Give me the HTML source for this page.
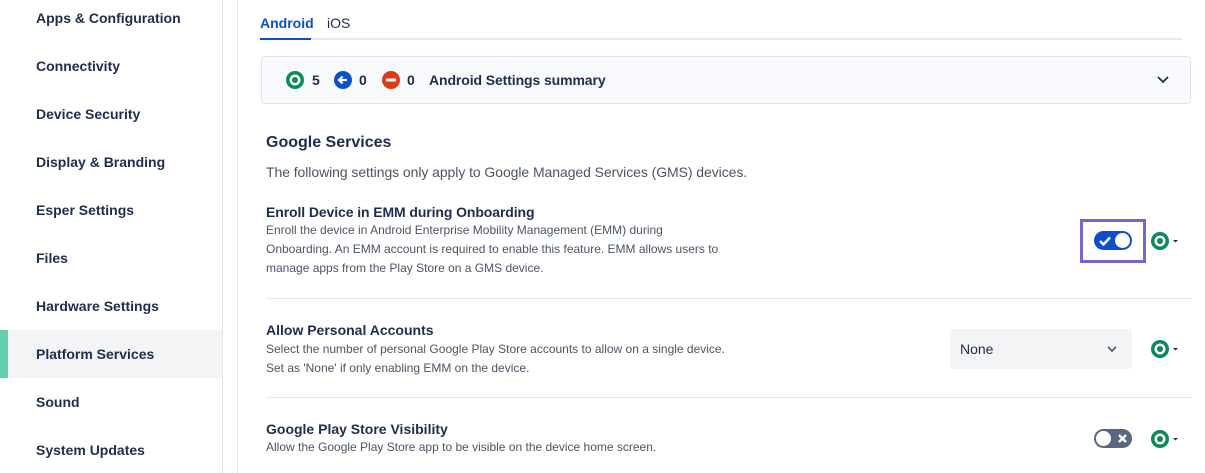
<!DOCTYPE html><html><head><style>
body{margin:0;width:1205px;height:473px;overflow:hidden;font-family:"Liberation Sans",sans-serif;background:#fff;color:#1f2d4d;position:relative}
.sb{position:absolute;left:0;top:0;width:222px;height:473px;border-right:1px solid #e5e7eb}
.sb div{position:absolute;left:36px;font-size:14px;font-weight:bold;color:#1f2d4d}
.act{position:absolute;left:0;top:330px;width:222px;height:48px;background:#f3f4f6}
.act:before{content:"";position:absolute;left:0;top:0;width:8px;height:48px;background:#62d0b0}
.vl{position:absolute;left:237px;top:0;width:1px;height:473px;background:#e8e9ec}
.a{position:absolute}
.t{font-size:14px;font-weight:bold}
.d{font-size:12px;color:#4b5563;line-height:19px}
</style></head><body>
<div class="sb">
<div style="top:10px">Apps &amp; Configuration</div>
<div style="top:58px">Connectivity</div>
<div style="top:106px">Device Security</div>
<div style="top:154px">Display &amp; Branding</div>
<div style="top:202px">Esper Settings</div>
<div style="top:250px">Files</div>
<div style="top:298px">Hardware Settings</div>
</div>
<div class="act"></div>
<div class="sb" style="background:none;border:none">
<div style="top:346px">Platform Services</div>
<div style="top:394px">Sound</div>
<div style="top:442px">System Updates</div>
</div>
<div class="vl"></div>
<div class="a" style="left:260px;top:15px;font-size:14px;color:#0b50c9;font-weight:bold">Android</div>
<div class="a" style="left:327px;top:15px;font-size:14px;color:#1f2d4d">iOS</div>
<div class="a" style="left:260px;top:38px;width:922px;height:2px;background:#e5e7eb"></div>
<div class="a" style="left:260px;top:38px;width:51px;height:2px;background:#0b50c9"></div>
<div class="a" style="left:261px;top:56px;width:928px;height:46px;background:#f8fafd;border:1px solid #dfe3ea;border-radius:4px"></div>
<svg class="a" style="left:286px;top:71px" width="18" height="18"><circle cx="9" cy="9" r="9" fill="#0a8a5a"/><circle cx="9" cy="9" r="5.5" fill="#fff"/><circle cx="9" cy="9" r="3" fill="#0a8a5a"/></svg>
<div class="a t" style="left:312px;top:72px">5</div>
<svg class="a" style="left:334px;top:71px" width="18" height="18"><circle cx="9" cy="9" r="9" fill="#0b50c9"/><path d="M13 9H5M8.5 5.5L5 9l3.5 3.5" stroke="#fff" stroke-width="2.2" fill="none"/></svg>
<div class="a t" style="left:359px;top:72px">0</div>
<svg class="a" style="left:382px;top:71px" width="18" height="18"><circle cx="9" cy="9" r="9" fill="#dd3b14"/><rect x="4" y="7.5" width="10" height="3" fill="#fff"/></svg>
<div class="a t" style="left:407px;top:72px">0</div>
<div class="a t" style="left:429px;top:72px;letter-spacing:-0.1px">Android Settings summary</div>
<svg class="a" style="left:1157px;top:75px" width="12" height="10"><path d="M1 2l5 5 5-5" stroke="#1f2d4d" stroke-width="1.8" fill="none"/></svg>
<div class="a" style="left:266px;top:134px;font-size:16px;font-weight:bold">Google Services</div>
<div class="a" style="left:266px;top:164px;font-size:14px;color:#4b5563;letter-spacing:-0.07px">The following settings only apply to Google Managed Services (GMS) devices.</div>
<div class="a t" style="left:266px;top:204px;letter-spacing:-0.1px">Enroll Device in EMM during Onboarding</div>
<div class="a d" style="left:266px;top:221px;width:460px">Enroll the device in Android Enterprise Mobility Management (EMM) during Onboarding. An EMM account is required to enable this feature. EMM allows users to manage apps from the Play Store on a GMS device.</div>
<div class="a" style="left:1080px;top:219px;width:66px;height:44px;border:3px solid #7f63c9;box-sizing:border-box"></div>
<div class="a" style="left:1094px;top:231px;width:38px;height:19px;border-radius:10px;background:#0b50c9"></div>
<svg class="a" style="left:1098px;top:235px" width="14" height="12"><path d="M2 6l3.5 3.5L12 2.5" stroke="#fff" stroke-width="2.4" fill="none"/></svg>
<div class="a" style="left:1115px;top:233px;width:15px;height:15px;border-radius:50%;background:#fff"></div>
<div class="a" style="left:266px;top:298px;width:926px;height:1px;background:#e5e7eb"></div>
<div class="a t" style="left:266px;top:322px">Allow Personal Accounts</div>
<div class="a d" style="left:266px;top:340px">Select the number of personal Google Play Store accounts to allow on a single device.<br>Set as 'None' if only enabling EMM on the device.</div>
<div class="a" style="left:950px;top:329px;width:182px;height:40px;background:#f3f4f6;border-radius:3px"></div>
<div class="a" style="left:960px;top:341px;font-size:14px">None</div>
<svg class="a" style="left:1107px;top:345px" width="10" height="8"><path d="M1 2l4 4 4-4" stroke="#4b5563" stroke-width="1.6" fill="none"/></svg>
<div class="a" style="left:266px;top:397px;width:926px;height:1px;background:#e5e7eb"></div>
<div class="a t" style="left:266px;top:421px">Google Play Store Visibility</div>
<div class="a d" style="left:266px;top:438px">Allow the Google Play Store app to be visible on the device home screen.</div>
<div class="a" style="left:1094px;top:429px;width:38px;height:19px;border-radius:10px;background:#5b6780"></div>
<div class="a" style="left:1096px;top:431px;width:15px;height:15px;border-radius:50%;background:#fff"></div>
<svg class="a" style="left:1117px;top:433px" width="11" height="11"><path d="M2 2l7 7M9 2l-7 7" stroke="#fff" stroke-width="2.4"/></svg>
<svg class="a" style="left:1151px;top:231px" width="30" height="20"><circle cx="9" cy="10" r="9" fill="#0a8a5a"/><circle cx="9" cy="10" r="5.5" fill="#fff"/><circle cx="9" cy="10" r="3" fill="#0a8a5a"/><path d="M22 9h5l-2.5 2.5z" fill="#1f2d4d"/></svg>
<svg class="a" style="left:1151px;top:339px" width="30" height="20"><circle cx="9" cy="10" r="9" fill="#0a8a5a"/><circle cx="9" cy="10" r="5.5" fill="#fff"/><circle cx="9" cy="10" r="3" fill="#0a8a5a"/><path d="M22 9h5l-2.5 2.5z" fill="#1f2d4d"/></svg>
<svg class="a" style="left:1151px;top:429px" width="30" height="20"><circle cx="9" cy="10" r="9" fill="#0a8a5a"/><circle cx="9" cy="10" r="5.5" fill="#fff"/><circle cx="9" cy="10" r="3" fill="#0a8a5a"/><path d="M22 9h5l-2.5 2.5z" fill="#1f2d4d"/></svg>
</body></html>
